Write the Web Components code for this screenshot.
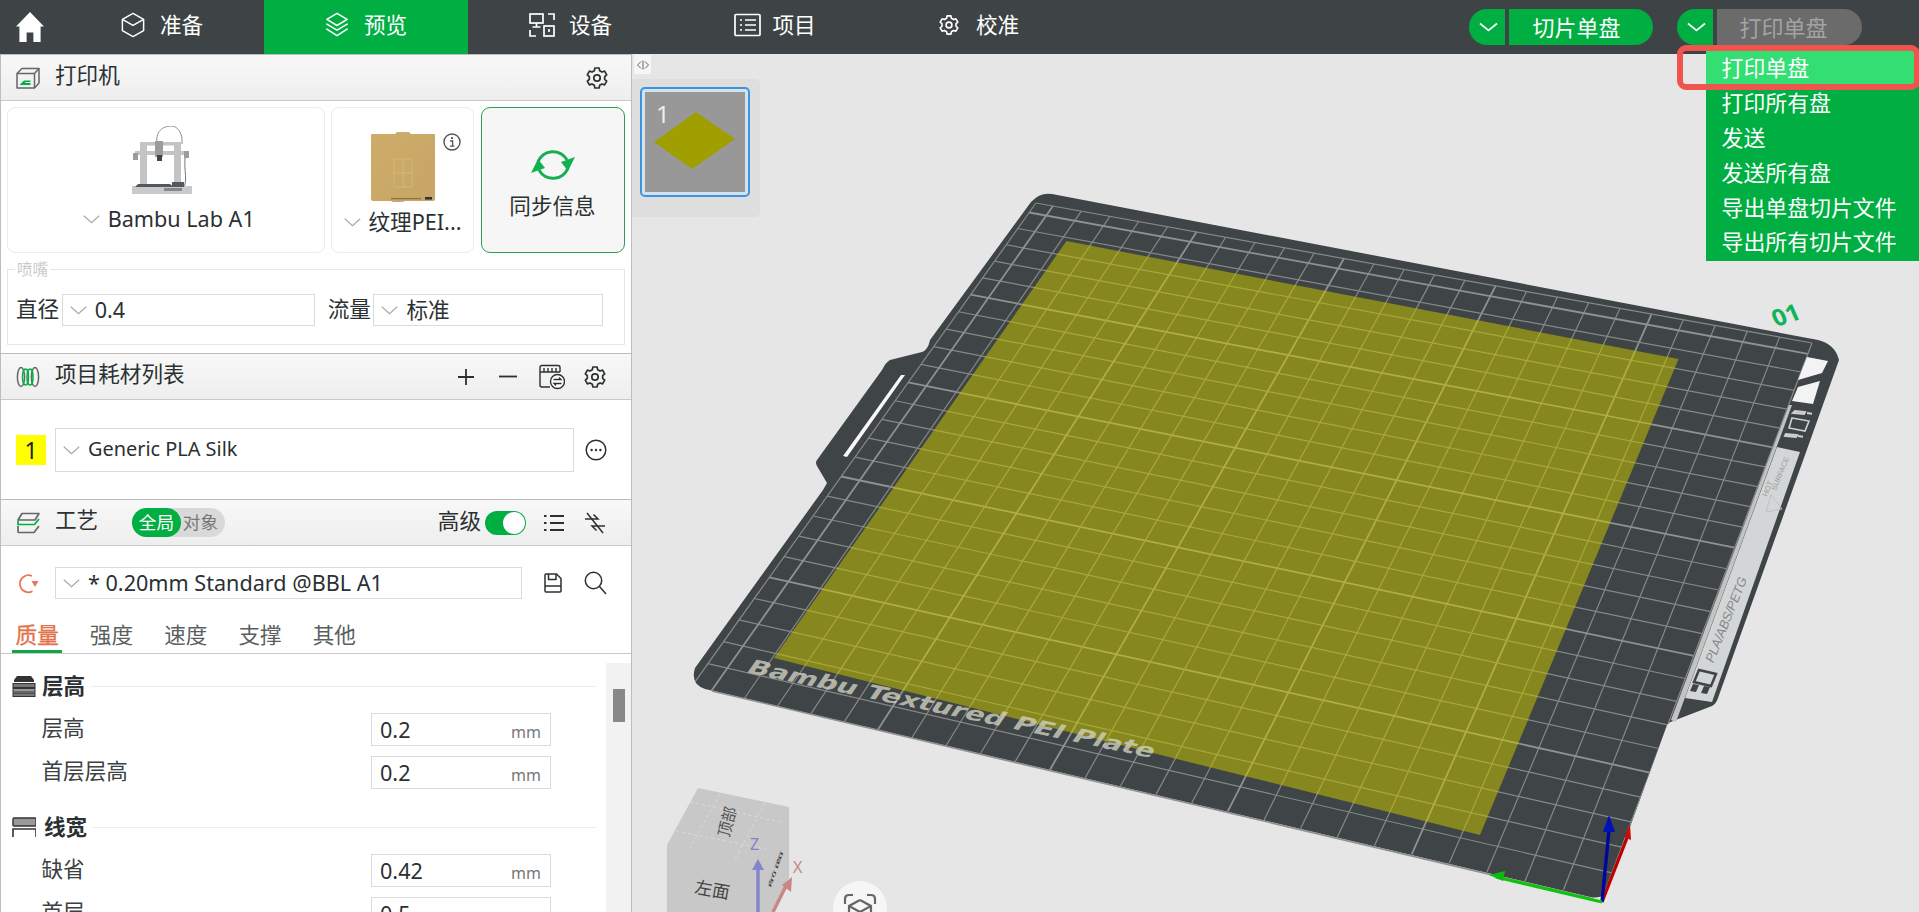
<!DOCTYPE html>
<html lang="zh-CN">
<head>
<meta charset="utf-8">
<title>Bambu Studio</title>
<style>
html,body{margin:0;padding:0;height:100%;overflow:hidden;background:#e6e6e6}
body{font-family:"Noto Sans","Noto Sans CJK SC",sans-serif;font-size:21.6px;color:#2b3032}
</style>
</head>
<body>
<slicer-app>
  <top-bar slot="top">
    <ui-icon slot="home" name="home" w="28" h="30"></ui-icon>
    <nav-tab icon="cube">准备</nav-tab>
    <nav-tab icon="layers" active>预览</nav-tab>
    <nav-tab icon="device">设备</nav-tab>
    <nav-tab icon="project">项目</nav-tab>
    <nav-tab icon="gearw">校准</nav-tab>
    <split-button slot="actions">切片单盘</split-button>
    <split-button slot="actions" disabled>打印单盘</split-button>
  </top-bar>

  <side-panel slot="side">
    <panel-head>
      <ui-icon slot="icon" name="printer" w="24" h="22"></ui-icon>
      打印机
      <ui-icon slot="actions" name="gear" w="22" h="22" style="margin-right:-2px"></ui-icon>
    </panel-head>
    <panel-body pad="6px 6px 8px 6px">
      <card-row>
        <device-card style="width:317.5px" tall="19" gap="12">
          <ui-icon slot="pic" name="a1" w="66" h="68" style="margin-left:-6px"></ui-icon>
          <select-box plain style="margin-left:6px">Bambu Lab A1</select-box>
        </device-card>
        <device-card style="width:143px" tall="25" gap="7">
          <ui-icon slot="pic" name="plate" w="64" h="70"></ui-icon>
          <ui-icon slot="badge" name="info" w="18" h="18"></ui-icon>
          <select-box plain>纹理PEI...</select-box>
        </device-card>
        <device-card style="width:144px" tall="40" gap="10" accent>
          <ui-icon slot="pic" name="sync" w="46" h="36"></ui-icon>
          同步信息
        </device-card>
      </card-row>
      <legend-box legend="喷嘴">
        <field-label>直径</field-label>
        <select-box style="width:253.5px;height:32px;margin-right:12.5px">0.4</select-box>
        <field-label>流量</field-label>
        <select-box style="width:230px;height:32px">标准</select-box>
      </legend-box>
    </panel-body>

    <panel-head>
      <ui-icon slot="icon" name="spools" w="24" h="22"></ui-icon>
      项目耗材列表
      <ui-icon slot="actions" name="plus" w="22" h="22"></ui-icon>
      <ui-icon slot="actions" name="minus" w="22" h="22" style="margin-left:20px"></ui-icon>
      <ui-icon slot="actions" name="swap" w="26" h="26" style="margin-left:20px"></ui-icon>
      <ui-icon slot="actions" name="gear" w="22" h="22" style="margin-left:19px"></ui-icon>
    </panel-head>
    <panel-body pad="28px 0 27px 15px">
      <tool-row>
        <color-swatch>1</color-swatch>
        <select-box style="width:519px;height:44px;margin-left:9px;font-size:19.9px"><span style="position:relative;top:-1px">Generic PLA Silk</span></select-box>
        <ui-icon name="more" w="22" h="22" style="margin-left:11px"></ui-icon>
      </tool-row>
    </panel-body>

    <panel-head>
      <ui-icon slot="icon" name="process" w="24" h="22"></ui-icon>
      工艺
      <scope-pill slot="extra"></scope-pill>
      <span slot="actions" style="margin-right:4px;padding-bottom:3px">高级</span>
      <toggle-switch slot="actions"></toggle-switch>
      <ui-icon slot="actions" name="list" w="22" h="22" style="margin-left:17px"></ui-icon>
      <ui-icon slot="actions" name="compare" w="22" h="22" style="margin-left:19px"></ui-icon>
    </panel-head>
    <panel-body pad="21px 0 0 17px">
      <tool-row>
        <ui-icon name="undo" w="21" h="21"></ui-icon>
        <select-box style="width:467px;height:32px;margin-left:16px">* 0.20mm Standard @BBL A1</select-box>
        <ui-icon name="save" w="18" h="20" style="margin-left:22px"></ui-icon>
        <ui-icon name="search" w="23" h="24" style="margin-left:22px"></ui-icon>
      </tool-row>
    </panel-body>
    <tab-strip>
      <strip-tab active>质量</strip-tab>
      <strip-tab>强度</strip-tab>
      <strip-tab>速度</strip-tab>
      <strip-tab>支撑</strip-tab>
      <strip-tab>其他</strip-tab>
    </tab-strip>
    <settings-list>
      <setting-group label="层高" icon="lh"></setting-group>
      <setting-row value="0.2">层高</setting-row>
      <setting-row value="0.2">首层层高</setting-row>
      <setting-group label="线宽" icon="lw" wide></setting-group>
      <setting-row value="0.42">缺省</setting-row>
      <setting-row value="0.5">首层</setting-row>
    </settings-list>
  </side-panel>

  <plate-view slot="main"></plate-view>

  <action-menu slot="overlay">
    <menu-item hot>打印单盘</menu-item>
    <menu-item>打印所有盘</menu-item>
    <menu-item>发送</menu-item>
    <menu-item>发送所有盘</menu-item>
    <menu-item>导出单盘切片文件</menu-item>
    <menu-item>导出所有切片文件</menu-item>
  </action-menu>
</slicer-app>

<script>
function gearPath(cx,cy,R,r,n){
  let d='';
  const st=Math.PI*2/n;
  for(let i=0;i<n;i++){
    const a=i*st-Math.PI/2;
    const p=[[a-st*.2,R],[a+st*.2,R],[a+st*.33,r],[a+st*.67,r]];
    p.forEach((q,k)=>{d+=(i===0&&k===0?'M':'L')+(cx+q[1]*Math.cos(q[0])).toFixed(2)+' '+(cy+q[1]*Math.sin(q[0])).toFixed(2)+' '});
  }
  return d+'Z';
}
const G=gearPath(11,11,10.2,7.8,6);
const ICONS={
 home:['0 0 28 30','<path fill="#fff" d="M14 0 28 14.5H24.6V30H17.4V20.5H10.6V30H3.4V14.5H0Z"/>'],
 cube:['0 0 26 28','<g fill="none" stroke="#fff" stroke-width="1.6" stroke-linejoin="round"><path d="M13 1.5 24.5 8V20L13 26.5 1.5 20V8Z"/><path d="M1.5 8 13 14.5 24.5 8"/></g>'],
 layers:['0 0 26 28','<g fill="none" stroke="#fff" stroke-width="1.7" stroke-linejoin="round" stroke-linecap="round"><path d="M13 1.5 24 8 13 14.5 2 8Z"/><path d="M2 13 13 19.5 24 13"/><path d="M2 18.5 13 25.5 24 18.5"/></g>'],
 device:['0 0 26 24','<g fill="none" stroke="#fff" stroke-width="1.7"><rect x="1" y="1" width="13" height="9"/><path d="M7.5 10v4M3.5 14h8"/><path d="M19 1h6v6M1 17v6h6"/><rect x="15" y="13" width="10" height="10"/><path d="M20 16v3"/></g>'],
 project:['0 0 27 24','<g fill="none" stroke="#fff" stroke-width="1.7"><rect x="1" y="1.5" width="25" height="21" rx="1"/><path d="M6 7h2M11 7h11M6 12h2M11 12h11M6 17h2M11 17h11"/></g>'],
 gearw:['0 0 22 22','<path fill="none" stroke="#fff" stroke-width="1.8" stroke-linejoin="round" d="'+G+'"/><circle cx="11" cy="11" r="3.2" fill="none" stroke="#fff" stroke-width="1.8"/>'],
 gear:['0 0 22 22','<path fill="none" stroke="#2b3032" stroke-width="1.7" stroke-linejoin="round" d="'+G+'"/><circle cx="11" cy="11" r="3.2" fill="none" stroke="#2b3032" stroke-width="1.7"/>'],
 printer:['0 0 24 22','<g fill="none" stroke="#666" stroke-width="1.5" stroke-linejoin="round"><path d="M1 6.5 6 1.5H23V16L18.5 21H1Z"/><path d="M1 6.5H18.5V21M18.5 6.5 23 1.5"/></g><path fill="#00ae42" d="M4 17.5 8 13.5H14.5V15H10L8.5 16H14.5V18H4Z"/>'],
 spools:['0 0 24 22','<g fill="none" stroke-width="1.5"><ellipse cx="5" cy="11" rx="3.6" ry="9.5" stroke="#666"/><ellipse cx="19" cy="11" rx="3.6" ry="9.5" stroke="#666"/><ellipse cx="9.5" cy="11" rx="3" ry="8" stroke="#00ae42"/><ellipse cx="14" cy="11" rx="3" ry="8" stroke="#00ae42"/></g>'],
 plus:['0 0 22 22','<path d="M11 3v16M3 11h16" stroke="#2b3032" stroke-width="1.8" fill="none"/>'],
 minus:['0 0 22 22','<path d="M2 10.5h18" stroke="#2b3032" stroke-width="1.8" fill="none"/>'],
 swap:['0 0 26 26','<g fill="none" stroke="#2b3032" stroke-width="1.4"><path d="M1 12V3.5Q1 1.5 3 1.5H19Q21 1.5 21 3.5V8"/><path d="M1 8H21M5 4v4M9 4v4M13 4v4M17 4v4" /><path d="M1 12V21Q1 23 3 23H11"/></g><circle cx="18.5" cy="17.5" r="7" fill="#fff" stroke="#2b3032" stroke-width="1.4"/><path d="M14.5 15.5H22L20 13.5M22.5 19.5H15L17 21.5" fill="none" stroke="#2b3032" stroke-width="1.3"/>'],
 more:['0 0 22 22','<circle cx="11" cy="11" r="9.8" fill="none" stroke="#2b3032" stroke-width="1.5"/><circle cx="6.6" cy="11" r="1.2" fill="#2b3032"/><circle cx="11" cy="11" r="1.2" fill="#2b3032"/><circle cx="15.4" cy="11" r="1.2" fill="#2b3032"/>'],
 process:['0 0 24 22','<g fill="none" stroke-width="1.7" stroke-linejoin="round"><path d="M6 1.5H23L19 8H2Z" stroke="#666"/><path d="M2 8.5V12.5H18.5L23 7" stroke="#00ae42"/><path d="M2 14V19.5Q2 20.5 3 20.5H18L23 14" stroke="#666"/></g>'],
 list:['0 0 22 22','<g stroke="#2b3032" stroke-width="1.8" fill="none"><path d="M7 4h14M7 11h14M7 18h14"/><path d="M1 4h2.5M1 11h2.5M1 18h2.5"/></g>'],
 compare:['0 0 22 22','<g stroke="#2b3032" stroke-width="1.5" fill="none"><path d="M3 1 19 21"/><path d="M1 7H14L9.5 2.5"/><path d="M21 14H8L12.5 18.5"/></g>'],
 undo:['0 0 21 21','<path d="M14 3A8.5 8.5 0 1 0 14.5 18.2" fill="none" stroke="#e8775a" stroke-width="1.8"/><path d="M13.5 8H20.5L17 14Z" fill="#e8775a"/>'],
 save:['0 0 18 20','<g fill="none" stroke="#2b3032" stroke-width="1.5" stroke-linejoin="round"><path d="M1 2Q1 1 2 1H12.5L17 5.5V18Q17 19 16 19H2Q1 19 1 18Z"/><path d="M4.5 1V6.5H12V1M1 13H17"/></g>'],
 search:['0 0 23 24','<circle cx="9.5" cy="9.5" r="8.2" fill="none" stroke="#2b3032" stroke-width="1.5"/><path d="M15.5 15.5 22 23" stroke="#2b3032" stroke-width="1.5" fill="none"/>'],
 info:['0 0 18 18','<circle cx="9" cy="9" r="8" fill="#fff" stroke="#555" stroke-width="1.4"/><circle cx="9" cy="5.2" r="1.1" fill="#555"/><path d="M7 8H9.6V13M7 13.2H11.4" stroke="#555" stroke-width="1.3" fill="none"/>'],
 sync:['0 0 46 36','<g fill="none" stroke="#12b04f" stroke-width="3"><path d="M8 15A16 16 0 0 1 37 13"/><path d="M38 21A16 16 0 0 1 9 23"/></g><polygon fill="#12b04f" points="45,10 38,24 31,15"/><polygon fill="#12b04f" points="1,26 8,12 15,21"/>'],
 lh:['0 0 24 22','<path fill="#333" d="M5 1H19L22 5V7H2V5Z"/><rect x="1" y="8.5" width="22" height="4" fill="#777" stroke="#333"/><rect x="1" y="13.5" width="22" height="3.5" fill="#999" stroke="#333"/><rect x="1" y="18" width="22" height="3.5" fill="#777" stroke="#333"/>'],
 lw:['0 0 24 20','<rect x="1" y="1" width="23" height="8" rx="1" fill="#999" stroke="#333" stroke-width="1.4"/><path d="M1 20V12H24V20" fill="none" stroke="#333" stroke-width="1.6"/>'],
 a1:['0 0 66 68',`<g style="filter:blur(.35px)"><path d="M27 17C25 3 36 0 41 0C47 0 53 6 52 18" fill="none" stroke="#8a8d90" stroke-width="1"/>
   <g fill="#c2c4c6"><rect x="10" y="17" width="7" height="46"/><rect x="44" y="17" width="7" height="46"/><rect x="10" y="16" width="41" height="3.5"/><rect x="5" y="25" width="52" height="4"/></g>
   <rect x="3" y="27" width="5" height="7" fill="#9a9c9e"/><rect x="54" y="25" width="5" height="7" fill="#9a9c9e"/>
   <rect x="25" y="15" width="8" height="16" fill="#9a9c9e"/><rect x="27" y="29" width="5" height="6" fill="#444"/>
   <path d="M55 32C54 46 58 54 53 64" fill="none" stroke="#555" stroke-width=".8"/>
   <path d="M2 60H62V68H2Z" fill="#c8cacb"/><path d="M8 58H40L44 61H5Z" fill="#55585a"/><rect x="42" y="56" width="12" height="5" fill="#55585a"/><rect x="34" y="62" width="18" height="3" fill="#85878a"/></g>`],
 plate:['0 0 64 70',`<defs><linearGradient id="g" x1="0" y1="0" x2="1" y2="1"><stop offset="0" stop-color="#cfac68"/><stop offset="1" stop-color="#c6a566"/></linearGradient></defs><path d="M1 2H24L26 0H38L40 2H63Q64 2 64 3V67Q64 69 62 69H34L32 70H22L20 69H2Q0 69 0 67V3Q0 2 1 2Z" fill="url(#g)"/>
   <g fill="none" stroke="#d8bc8a" stroke-width=".7"><rect x="23" y="27" width="18" height="28"/><path d="M32 27V55M23 41H41"/></g>
   <rect x="20" y="66" width="30" height="1.3" fill="#8a7445"/><rect x="54" y="65" width="7" height="2.6" fill="#333"/>`]
};
function shadow(html){
  return class extends HTMLElement{
    constructor(){super();this.attachShadow({mode:'open'}).innerHTML=typeof html==='function'?html(this):html;}
  };
}
class UiIcon extends HTMLElement{
  connectedCallback(){
    if(this.shadowRoot)return;
    const i=ICONS[this.getAttribute('name')],w=this.getAttribute('w'),h=this.getAttribute('h');
    this.attachShadow({mode:'open'}).innerHTML=`<style>:host{display:inline-flex;flex:none;width:${w}px;height:${h}px}svg{display:block;width:100%;height:100%}</style><svg viewBox="${i[0]}" preserveAspectRatio="none">${i[1]}</svg>`;
  }
}
customElements.define('ui-icon',UiIcon);

customElements.define('slicer-app',shadow(`<style>
:host{display:grid;grid-template-columns:632px 1fr;grid-template-rows:54px 1fr;width:100vw;height:100vh;position:relative;overflow:hidden}
</style><slot name="top"></slot><slot name="side"></slot><slot name="main"></slot><slot name="overlay"></slot>`));

customElements.define('top-bar',shadow(`<style>
:host{grid-column:1/3;display:flex;height:54px;background:#3e4446;color:#fff;align-items:stretch;position:relative}
.h{display:flex;align-items:center;width:44px;padding-left:16px}
.a{margin-left:auto;display:flex;gap:24px;align-items:center;padding-right:57px}
</style><div class="h"><slot name="home"></slot></div><slot></slot><div class="a"><slot name="actions"></slot></div>`));

customElements.define('nav-tab',shadow(el=>{
  const n=el.getAttribute('icon');
  const sz={cube:[24,26],layers:[24,26],device:[26,24],project:[27,24],gearw:[20,20]}[n];
  const gap={cube:15,layers:15,device:14,project:11,gearw:17}[n];
  const shift={project:2,gearw:2,device:1}[n]||0;
  return `<style>
:host{width:204px;display:flex;align-items:center;justify-content:center;gap:${gap}px;font-size:21.6px;line-height:26px;padding:0 0 4px ${shift}px;box-sizing:border-box}
:host([active]){background:#00ae42}
</style><ui-icon name="${n}" w="${sz[0]}" h="${sz[1]}"></ui-icon><span><slot></slot></span>`;
}));

customElements.define('split-button',shadow(`<style>
:host{display:flex;gap:4px;height:36px;color:#fff;font-size:22px}
.l{width:36px;background:#00ae42;border-radius:18px 0 0 18px;display:flex;align-items:center;justify-content:center}
.r{width:144px;background:#00ae42;border-radius:0 18px 18px 0;display:flex;align-items:center;justify-content:center;line-height:36px;padding-right:9px;box-sizing:border-box}
:host([disabled]) .r{background:#6b6b6b;color:#a3a3a3;width:145px;padding-right:12px}
svg{width:19px;height:10px;display:block;margin-left:3px}
</style><div class="l"><svg viewBox="0 0 19 10"><path d="M1 1.5 9.5 8.5 18 1.5" fill="none" stroke="#fff" stroke-width="1.7"/></svg></div><div class="r"><slot></slot></div>`));

customElements.define('side-panel',shadow(`<style>
:host{display:flex;flex-direction:column;background:#fff;box-sizing:border-box;width:632px;border-left:1px solid #bdbdbd;border-right:1px solid #bdbdbd;overflow:hidden;height:858px;z-index:1}
</style><slot></slot>`));

customElements.define('panel-head',shadow(`<style>
:host{display:flex;align-items:center;height:47px;box-sizing:border-box;flex:none;background:linear-gradient(#f8f8f8,#eeeeee);border-top:1px solid #bcbcbc;border-bottom:1px solid #c9c9c9;padding:0 25px 0 15px;font-size:21.6px;line-height:26px}
.i{width:24px;margin-right:15px;display:flex}
.x{margin-left:34px;display:flex}
.a{margin-left:auto;display:flex;align-items:center}
.t{padding-bottom:5px}
</style><div class="i"><slot name="icon"></slot></div><span class="t"><slot></slot></span><div class="x"><slot name="extra"></slot></div><div class="a"><slot name="actions"></slot></div>`));

customElements.define('panel-body',shadow(el=>`<style>:host{display:block;flex:none;padding:${el.getAttribute('pad')};box-sizing:border-box}</style><slot></slot>`));
customElements.define('card-row',shadow(`<style>:host{display:flex;gap:6.5px;height:146px}</style><slot></slot>`));
customElements.define('device-card',shadow(el=>`<style>
:host{display:flex;flex-direction:column;align-items:center;box-sizing:border-box;height:146px;border:1px solid #ececec;border-radius:8px;padding-top:${+el.getAttribute('tall')-1}px;gap:${el.getAttribute('gap')}px;position:relative;line-height:26px;font-size:21.6px}
:host([accent]){border:1.5px solid #2b9d58;background:#f6f6f6;border-radius:9px}
.b{position:absolute;top:22px;right:12px}
</style><slot name="pic"></slot><slot></slot><div class="b"><slot name="badge"></slot></div>`));

customElements.define('select-box',shadow(`<style>
:host{display:flex;align-items:center;box-sizing:border-box;border:1px solid #dadada;background:#fff;padding-left:7px;font-size:21.6px;line-height:26px;white-space:nowrap;flex:none;color:#2b3032}
:host([plain]){border:0;background:none;padding:0}
svg{width:17px;height:9px;margin-right:8px;flex:none;display:block}
</style><svg viewBox="0 0 17 9"><path d="M.8 .8 8.5 7.6 16.2 .8" fill="none" stroke="#a9a9a9" stroke-width="1.2"/></svg><span><slot></slot></span>`));

customElements.define('legend-box',shadow(el=>`<style>
:host{display:flex;align-items:flex-start;box-sizing:border-box;position:relative;margin-top:16px;height:76px;border:1px solid #e6e6e6;padding:24px 7px 0 8px}
.l{position:absolute;top:-12px;left:7px;padding:0 2px;background:#fff;color:#c9c9c9;font-size:15.6px;line-height:22px}
</style><span class="l">${el.getAttribute('legend')}</span><slot></slot>`));
customElements.define('field-label',shadow(`<style>:host{display:block;flex:none;white-space:nowrap;margin:2px 2.5px 0 0;font-size:21.6px;line-height:26px;width:43.2px}</style><slot></slot>`));
customElements.define('tool-row',shadow(`<style>:host{display:flex;align-items:center}</style><slot></slot>`));
customElements.define('color-swatch',shadow(`<style>:host{display:flex;width:30px;height:30px;background:#ffff00;align-items:center;justify-content:center;font-size:23px;flex:none;color:#222}</style><slot></slot>`));
customElements.define('scope-pill',shadow(`<style>
:host{display:flex;width:93px;height:29px;background:#d9d9d9;border-radius:15px;font-size:17.6px;line-height:29px;color:#777}
b{font-weight:400;width:48.5px;background:#00ae42;color:#fff;border-radius:15px;text-align:center}
span{flex:1;text-align:center;padding-right:5px}
</style><b>全局</b><span>对象</span>`));
customElements.define('toggle-switch',shadow(`<style>
:host{display:block;width:41px;height:24px;background:#00ae42;border-radius:12px;position:relative}
i{position:absolute;right:1px;top:1px;width:22px;height:22px;border-radius:50%;background:#fff}
</style><i></i>`));
customElements.define('tab-strip',shadow(`<style>:host{display:flex;flex:none;margin-top:21px;padding-left:11px;gap:23.9px;border-bottom:1px solid #c9c9c9;height:34px;box-sizing:border-box}</style><slot></slot>`));
customElements.define('strip-tab',shadow(`<style>
:host{display:block;padding:0 3.6px;width:43.2px;box-sizing:content-box;line-height:30px;height:33px;font-size:21.6px;color:#5a5f61}
:host([active]){color:#e4724a;-webkit-text-stroke:.3px #e4724a;border-bottom:3px solid #12a64a;height:30px}
</style><slot></slot>`));
customElements.define('settings-list',shadow(`<style>
:host{display:flex;flex:1;min-height:0;overflow:hidden}
.c{flex:1;padding-top:19px;min-width:0}
.s{width:25px;margin-top:9px;background:#f2f2f2;flex:none}
.s i{display:block;width:11.5px;height:33px;margin:26px 0 0 7px;background:#888}
</style><div class="c"><slot></slot></div><div class="s"><i></i></div>`));
customElements.define('setting-group',shadow(el=>{
  const wide=el.hasAttribute('wide');
  return `<style>
:host{display:flex;align-items:center;height:26px;padding:0 10px 0 11px;margin:${wide?25:0}px 0 14px;font-size:21.6px;font-weight:700;line-height:26px}
span{margin-left:${wide?8:6}px}
i{flex:1;height:1px;background:#ececec;margin-left:6px}
</style><ui-icon name="${el.getAttribute('icon')}" w="24" h="${wide?20:22}"></ui-icon><span>${el.getAttribute('label')}</span><i></i>`;
}));
customElements.define('setting-row',shadow(el=>`<style>
:host{display:flex;align-items:center;height:33px;margin-bottom:10px;padding-left:40.5px;font-size:21.6px;line-height:26px}
.l{width:329.5px;color:#3c4143;padding-bottom:3px}
.v{width:180px;height:33px;box-sizing:border-box;border:1px solid #dadada;display:flex;align-items:center;justify-content:space-between;padding:0 9px 0 8px;flex:none}
.u{font-size:16px;color:#777;padding-top:5px}
</style><div class="l"><slot></slot></div><div class="v"><span>${el.getAttribute('value')}</span><span class="u">mm</span></div>`));

customElements.define('action-menu',shadow(`<style>
:host{position:absolute;left:1706px;top:51px;width:213px;background:#00ae42;display:block;height:210px;z-index:5}
.ring{position:absolute;left:-29px;top:-6px;width:243px;height:45px;box-sizing:border-box;border:6px solid #f0544f;border-radius:9px;pointer-events:none}
</style><slot></slot><div class="ring"></div>`));
customElements.define('menu-item',shadow(`<style>
:host{display:block;height:34.9px;line-height:34px;padding-left:15.5px;color:#fff;font-size:21.9px;white-space:nowrap}
:host([hot]){background:#33df72}
</style><slot></slot>`));

/* ---------- 3D plate ---------- */
function homography(p){
  const [p0,p1,p2,p3]=p;
  const dx1=p1[0]-p2[0],dx2=p3[0]-p2[0],sx=p0[0]-p1[0]+p2[0]-p3[0];
  const dy1=p1[1]-p2[1],dy2=p3[1]-p2[1],sy=p0[1]-p1[1]+p2[1]-p3[1];
  const det=dx1*dy2-dx2*dy1;
  const g=(sx*dy2-dx2*sy)/det,h=(dx1*sy-sx*dy1)/det;
  const a=p1[0]-p0[0]+g*p1[0],b=p3[0]-p0[0]+h*p3[0],c=p0[0];
  const d=p1[1]-p0[1]+g*p1[1],e=p3[1]-p0[1]+h*p3[1],f=p0[1];
  return (u,v)=>{const w=g*u+h*v+1;return [(a*u+b*v+c)/w,(d*u+e*v+f)/w]};
}
function gridLines(thin,thick,tw,bw){
  const H=homography([[1602,899],[692,686],[1036,203],[1812,343]]);
  let s='';
  for(let i=0;i<=25;i++){
    const t=i/25.6,bold=i%5===0;
    const a=H(t,0),b=H(t,1),c=H(0,t),d=H(1,t);
    const attr=`stroke="${bold?thick:thin}" stroke-width="${bold?bw:tw}"`;
    if(i>0) s+=`<line x1="${a[0]}" y1="${a[1]}" x2="${b[0]}" y2="${b[1]}" ${attr}/>`;
    if(i>0) s+=`<line x1="${c[0]}" y1="${c[1]}" x2="${d[0]}" y2="${d[1]}" ${attr}/>`;
  }
  const p=H(0,1),q=H(1,1);
  s+=`<line x1="${p[0]}" y1="${p[1]}" x2="${q[0]}" y2="${q[1]}" stroke="${thin}" stroke-width="${tw}"/>`;
  const r=H(1,0);
  s+=`<line x1="${q[0]}" y1="${q[1]}" x2="${r[0]}" y2="${r[1]}" stroke="${thin}" stroke-width="${tw}"/>`;
  const o=H(0,0);
  s+=`<line x1="${o[0]}" y1="${o[1]}" x2="${p[0]}" y2="${p[1]}" stroke="${thin}" stroke-width="${tw}"/>`;
  return s;
}
const OUTLINE='M1052 194 L1818 340 Q1835 344 1839 360 L1718 698 Q1716 704 1712 706 L1673 721 Q1669 722 1667 725 L1606 893 Q1600 899 1590 897 L705 689 Q690 684 695 668 L823 490 L827 483 L817 466 Q815 462 817 460 L882 370 Q886 362 890 360 L922 352 Q928 350 930 340 L1031 202 Q1040 192 1052 194Z';
const YEL='1066.5,241 1678.5,359 1480,835 774,658';
customElements.define('plate-view',shadow(`<style>
:host{display:block;position:relative;background:#e6e6e6;overflow:hidden}
svg.v{display:block;width:1287px;height:858px}
text{font-family:"Noto Sans","Noto Sans CJK SC",sans-serif}
.tg{position:absolute;left:2px;top:1px;width:17px;height:19px;background:#f6f6f6;display:flex;align-items:center;justify-content:center}
.tg svg{width:14px;height:10px;display:block}
.shelf{position:absolute;left:0;top:25px;width:128px;height:138px;background:#dedede;border-radius:0 5px 5px 0;box-sizing:border-box;padding:8px 10px 0 8px}
.thumb{box-sizing:border-box;width:110px;height:110px;border:2px solid #3d94e0;border-radius:5px;background:#d4e2ee;padding:3px}
.thumb svg{display:block;width:100%;height:100%}
</style>
<svg class="v" viewBox="632 54 1287 858">
  <path d="${OUTLINE}" fill="#3f4446"/>
  <clipPath id="pc"><path d="${OUTLINE}"/></clipPath>
  <g clip-path="url(#pc)">${gridLines('#868989','#8f9292',1.2,1.8)}</g>
  <polygon points="${YEL}" fill="#87871f"/>
  <clipPath id="yc"><polygon points="${YEL}"/></clipPath>
  <g clip-path="url(#yc)">${gridLines('#a9a93a','#b0b042',1.2,1.7)}</g>
  <path d="M712 691 1590 898" stroke="#8e9090" stroke-width="1.6" fill="none"/>

  <text transform="matrix(.978 .207 -.47 .68 745 672)" font-size="26" font-weight="700" style="font-family:'DejaVu Sans'" fill="#d2d2c2" fill-opacity=".8" textLength="415" lengthAdjust="spacingAndGlyphs">Bambu Textured PEI Plate</text>
  <text transform="matrix(.95 -.3 .4 .9 1776 327)" font-size="24" font-weight="700" fill="#11b457" textLength="28" lengthAdjust="spacingAndGlyphs">01</text>

  <polygon points="1685,698 1712,702 1800,452 1777,447" fill="#d3d6d6"/>
  <polygon points="1789,405 1792,405 1676,722 1671,720" fill="#c2c4c4"/>
  <polygon points="1807,357 1828,361 1822,373 1798,380" fill="#f3f3f3"/>
  <polygon points="1798,387 1820,381 1813,404 1792,401" fill="#f3f3f3"/>
  <polygon points="1792,418 1809,421 1805,431 1789,428" fill="none" stroke="#cfd1d1" stroke-width="1.6"/>
  <path d="M1795 411l-2 2 11 1 1-2zM1807 413l5 .8M1786 434l-1 2 11 1 1-2zM1798 436l5 .8" stroke="#cfd1d1" stroke-width="2" fill="none"/>
  <text transform="translate(1713 664) rotate(-68) skewX(-10)" font-size="13" letter-spacing="1" fill="#85888a" style="font-family:'Liberation Sans'" textLength="92">PLA/ABS/PETG</text>
  <text transform="translate(1767 497) rotate(-68)" font-size="7.5" fill="#9a9d9f" style="font-family:'Liberation Sans'">HOT</text>
  <text transform="translate(1776 491) rotate(-68)" font-size="7.5" fill="#9a9d9f" style="font-family:'Liberation Sans'">SURFACE</text>
  <polygon points="1766,512 1771,495 1782,509" fill="none" stroke="#bfc2c2" stroke-width="1"/>
  <polygon points="1699,670 1716,674 1711,686 1694,682" fill="none" stroke="#3f4446" stroke-width="2.5"/>
  <path d="M1693 684l6 1-3 7-6-1zM1704 686l6 1-3 7-6-1z" fill="#3f4446"/>
  <path d="M901 375 905 375 847 457 843 456Z" fill="#f7f7f7"/>

  <path d="M1602 902 1627 838" stroke="#c00000" stroke-width="3.2" fill="none"/><polygon points="1630,824 1631,840 1624,837" fill="#c80d0d"/>
  <path d="M1602 902 1609 830" stroke="#00069a" stroke-width="3.4" fill="none"/><polygon points="1609,815 1615,832 1603,832" fill="#0011b8"/>
  <path d="M1602 902 1496 877" stroke="#0cc40c" stroke-width="3.2" fill="none"/><polygon points="1489,875 1505,871 1503,881" fill="#0fb90f"/>

  <polygon points="698,788 789,807 789,878 773,912 667,912 667,845" fill="#c8c8c8"/>
  <g stroke="#dedede" stroke-width=".8" stroke-dasharray="3 3" fill="none"><path d="M690 802 780 822M676 831 766 849M720 794 690 848M765 803 735 859"/></g>
  <text transform="translate(729 838) rotate(-75) scale(.8 .85)" font-size="19" fill="#555">顶部</text>
  <text transform="translate(694 893) rotate(10)" font-size="17.5" fill="#444">左面</text>
  <text transform="matrix(.34 -.94 .17 .12 770 889)" font-size="20" fill="#333">前面</text>
  <text x="750" y="850" font-size="16" fill="#8282c8">Z</text>
  <text x="793" y="873" font-size="16" fill="#c88686">X</text>
  <path d="M758 868V912" stroke="#8484c8" stroke-width="3.4"/><polygon points="758,859 764,870 752,870" fill="#8484c8"/>
  <path d="M773 912 787 884" stroke="#c88686" stroke-width="3.4"/><polygon points="792,877 791,892 782,885" fill="#c88686"/>
  <circle cx="860" cy="908" r="27" fill="#f6f6f6"/>
  <g fill="none" stroke="#666" stroke-width="2.2"><path d="M845 904V899Q845 895 849 895H853M867 895H871Q875 895 875 899V904"/><path d="M860 900 871 906V916M860 900 849 906V916M849 906 860 912 871 906M860 912V920"/></g>
</svg>
<div class="tg"><svg viewBox="0 0 14 10"><path d="M5 1.5 1.5 5 5 8.5M7 .5V9.5M9 1.5 12.5 5 9 8.5" fill="none" stroke="#666" stroke-width="1"/></svg></div>
<div class="shelf"><div class="thumb"><svg viewBox="0 0 100 100" preserveAspectRatio="none"><rect width="100" height="100" fill="#989898"/><polygon points="51,20 90,47 47,77 9,50" fill="#a09f00"/><text x="11" y="31" font-size="24" fill="#eee" font-family="Noto Sans">1</text></svg></div></div>
`));
</script>
</body>
</html>
